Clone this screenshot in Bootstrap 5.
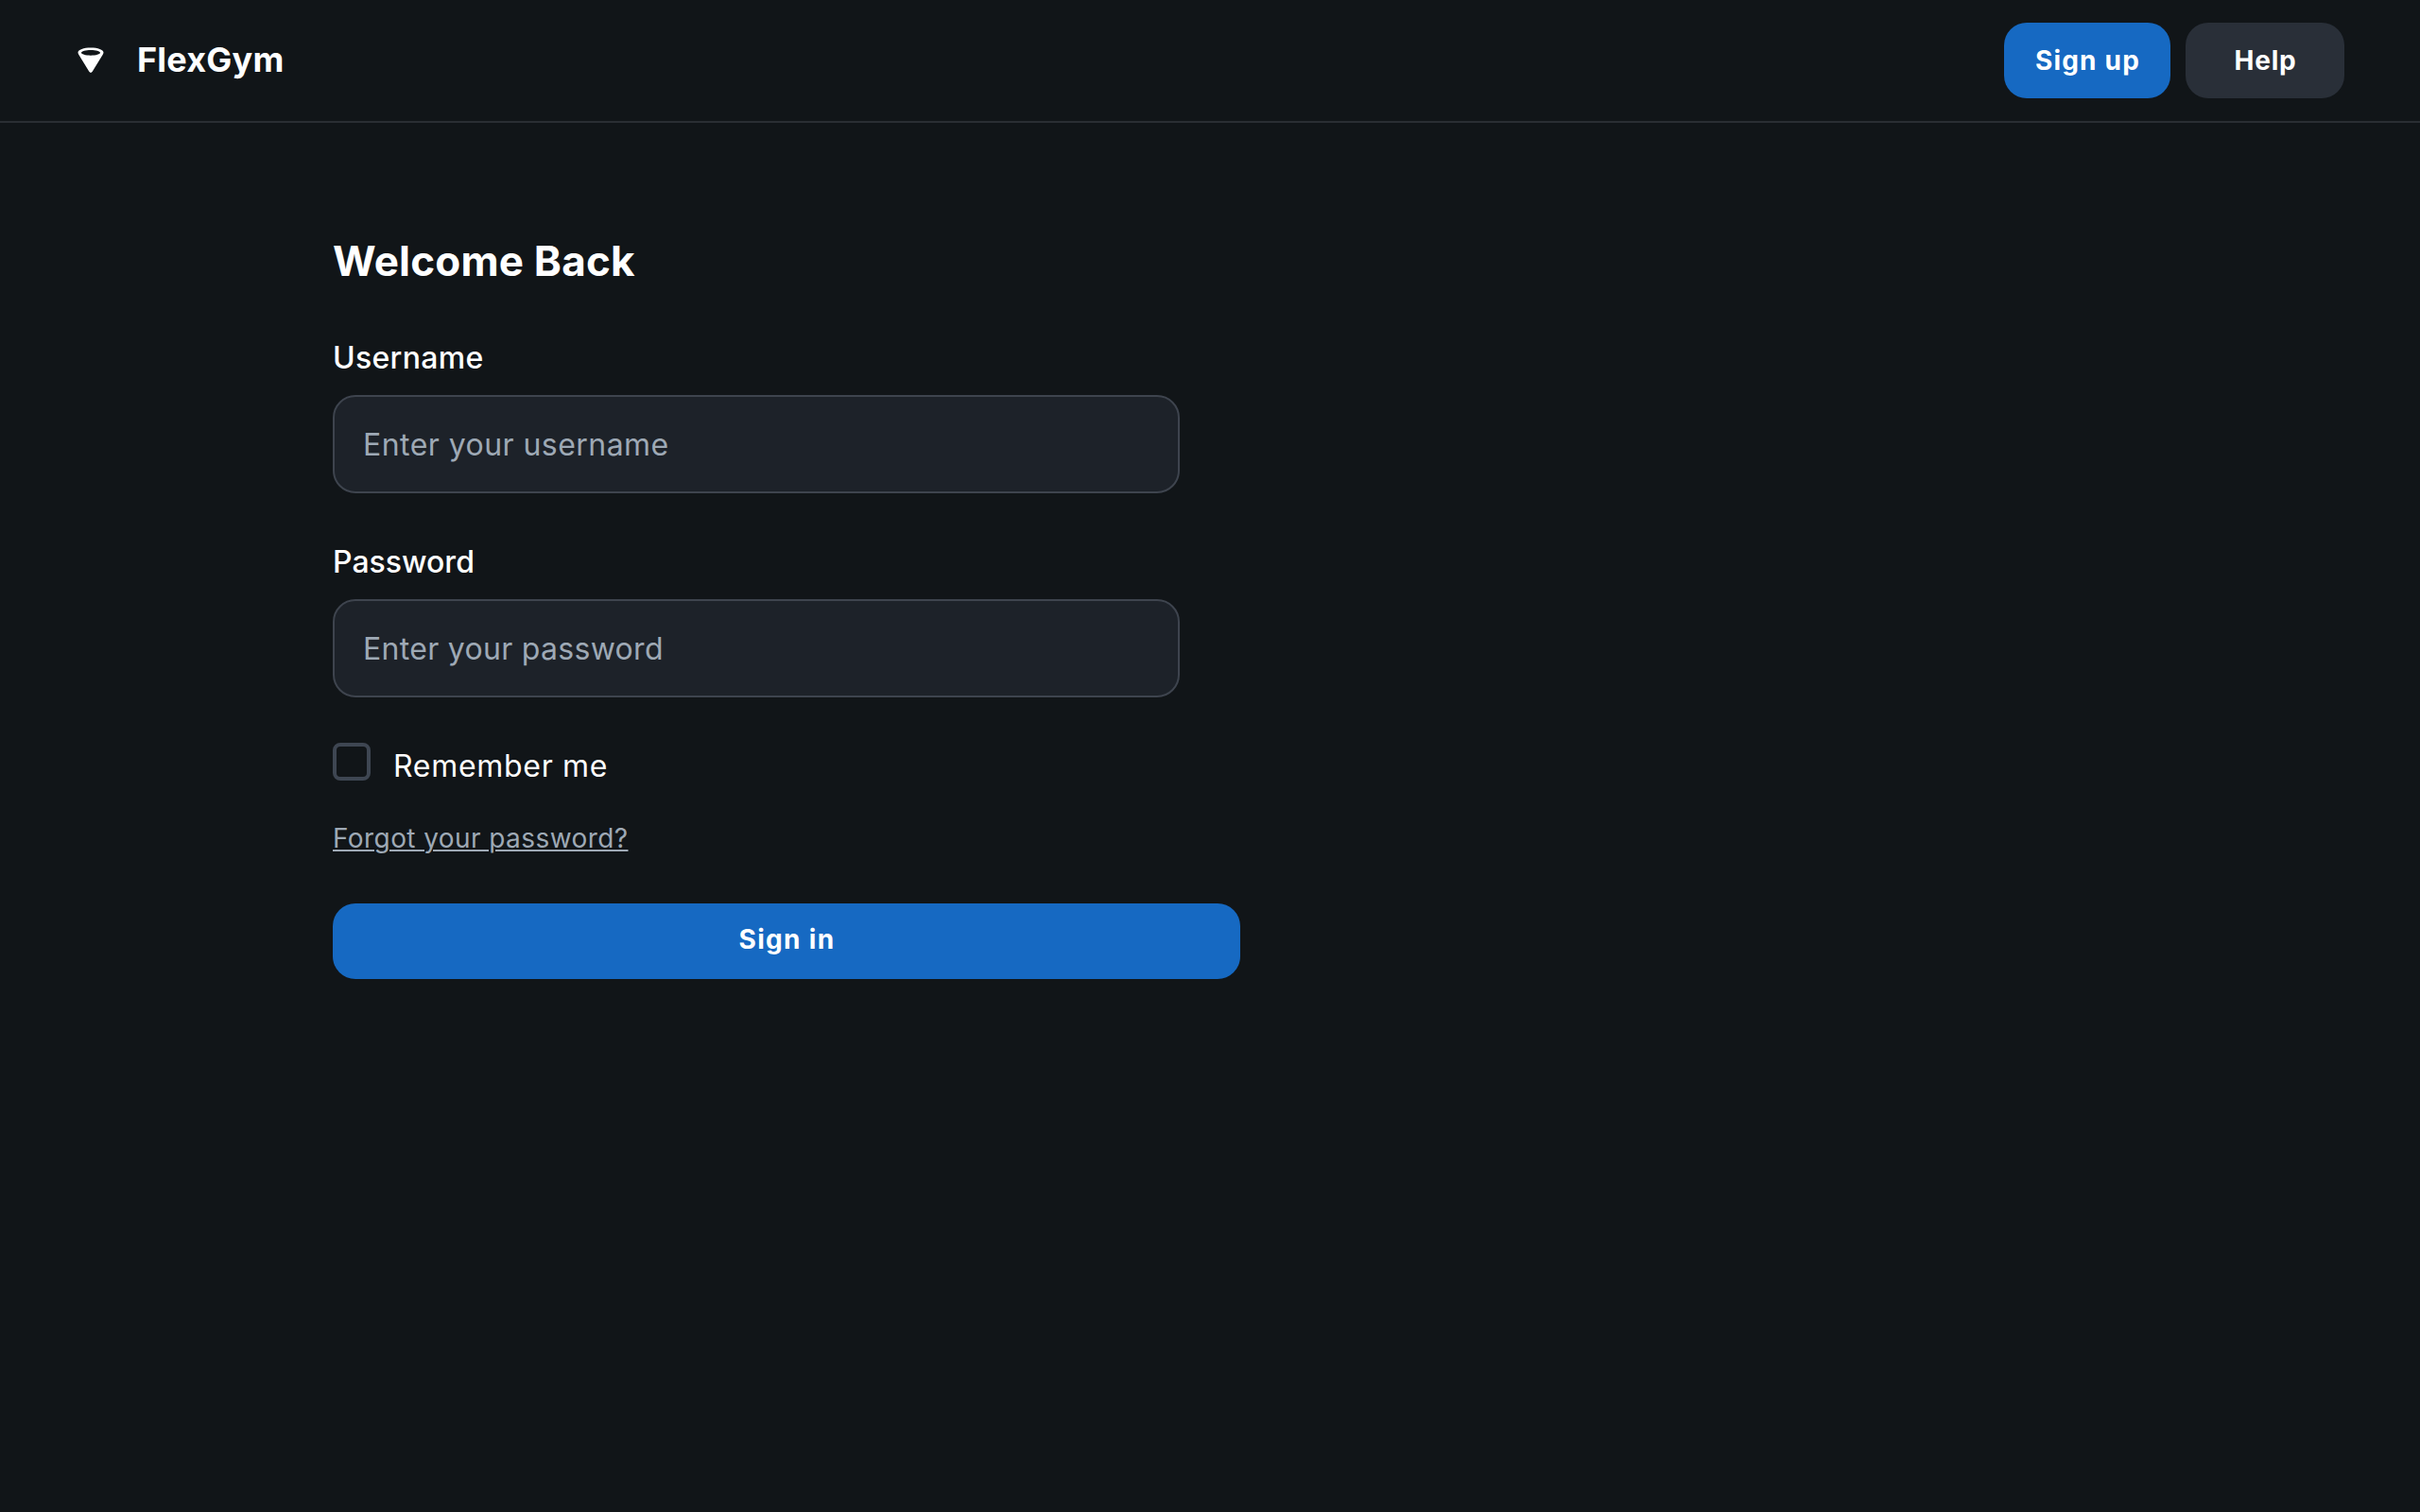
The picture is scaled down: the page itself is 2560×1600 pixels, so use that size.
<!DOCTYPE html>
<html lang="en" data-bs-theme="dark">
<head>
<meta charset="utf-8">
<meta name="viewport" content="width=device-width, initial-scale=1">
<title>FlexGym – Sign in</title>
<link href="https://cdn.jsdelivr.net/npm/bootstrap@5.3.0/dist/css/bootstrap.min.css" rel="stylesheet">
<style>
body{background:#111518;color:#fff;font-family:Inter,"Open Sans",sans-serif;min-height:100vh}
.site-header{height:130px;padding:0 80px;border-bottom:2px solid #2a2e33}
.brand-link{gap:32px;color:#fff;font-size:36px;font-weight:700;line-height:48px}
.brand-name{padding:0 0 2px 1px;letter-spacing:.2px}
.gym-btn{--bs-btn-color:#fff;--bs-btn-hover-color:#fff;--bs-btn-border-width:0;--bs-btn-border-radius:24px;--bs-btn-font-weight:700;height:80px;padding:0 0 0 1px;font-size:28px;line-height:42px}
.gym-btn-blue{--bs-btn-bg:#1669c2;--bs-btn-hover-bg:#1d74d1}
.gym-btn-gray{--bs-btn-bg:#292f38;--bs-btn-hover-bg:#343b46}
.btn-signup{width:176px;letter-spacing:1.2px}
.btn-help{width:168px;letter-spacing:.8px}
.btn-signin{width:960px;padding-bottom:4px;margin-top:48px;letter-spacing:1.3px}
.login-panel{width:960px;margin-left:352px;padding-top:118px}
.login-title{font-size:44px;line-height:56px;font-weight:700;margin-bottom:51px;letter-spacing:.2px}
.field-group{width:896px}
.field-group + .field-group{margin-top:49px}
.field-group .form-label{font-size:32px;line-height:48px;font-weight:500;margin-bottom:15px}
.t-user{letter-spacing:.3px}
.gym-input,.gym-input:focus{height:104px;padding:0 30px;font-size:32px;background:#1d2229;border:2px solid #3e444e;border-radius:24px;color:#fff}
.gym-input::placeholder{color:#9ea9b5;opacity:1}
.ph-user{letter-spacing:.45px}
.ph-pass{letter-spacing:.3px}
.remember-row{margin-top:48px;gap:24px}
.remember-row .form-check-input{width:40px;height:40px;border:4px solid #3e4652;border-radius:8px;background-color:transparent;flex:none}
.remember-row .form-check-label{font-size:32px;line-height:48px;padding-top:1px;letter-spacing:.7px}
.forgot-link{font-size:28px;line-height:42px;color:#9ea9b5;margin-top:31px;letter-spacing:.42px;text-decoration-thickness:2px;text-underline-offset:2px}
</style>
</head>
<body>
<header class="site-header d-flex align-items-center justify-content-between">
  <a href="#" class="brand-link d-flex align-items-center text-decoration-none">
    <svg width="32" height="32" viewBox="0 0 32 32" aria-hidden="true"><path fill="#fff" fill-rule="evenodd" d="M16 2.5C8.5 2.5 2.5 4.6 2.5 7.6C2.5 8.5 2.9 9.3 3.4 10.1L14.3 27.8Q16 30 17.7 27.8L28.6 10.1C29.1 9.3 29.5 8.5 29.5 7.6C29.5 4.6 23.5 2.5 16 2.5ZM16 5C21.5 5 26 6.3 26 7.8C26 9.4 21.5 10.7 16 10.7C10.5 10.7 6 9.4 6 7.8C6 6.3 10.5 5 16 5Z"/></svg>
    <span class="brand-name">FlexGym</span>
  </a>
  <nav class="d-flex gap-3">
    <button type="button" class="btn gym-btn gym-btn-blue btn-signup">Sign up</button>
    <button type="button" class="btn gym-btn gym-btn-gray btn-help">Help</button>
  </nav>
</header>
<main class="login-panel">
  <h1 class="login-title">Welcome Back</h1>
  <form class="d-flex flex-column align-items-start">
    <div class="field-group">
      <label for="username" class="form-label d-block"><span class="t-user">Username</span></label>
      <input id="username" type="text" class="form-control gym-input ph-user" placeholder="Enter your username">
    </div>
    <div class="field-group">
      <label for="password" class="form-label d-block">Password</label>
      <input id="password" type="password" class="form-control gym-input ph-pass" placeholder="Enter your password">
    </div>
    <div class="remember-row d-flex align-items-start">
      <input id="remember" type="checkbox" class="form-check-input m-0">
      <label for="remember" class="form-check-label">Remember me</label>
    </div>
    <a href="#" class="forgot-link">Forgot your password?</a>
    <button type="button" class="btn gym-btn gym-btn-blue btn-signin">Sign in</button>
  </form>
</main>
<script src="https://cdn.jsdelivr.net/npm/bootstrap@5.3.0/dist/js/bootstrap.bundle.min.js"></script>
</body>
</html>
